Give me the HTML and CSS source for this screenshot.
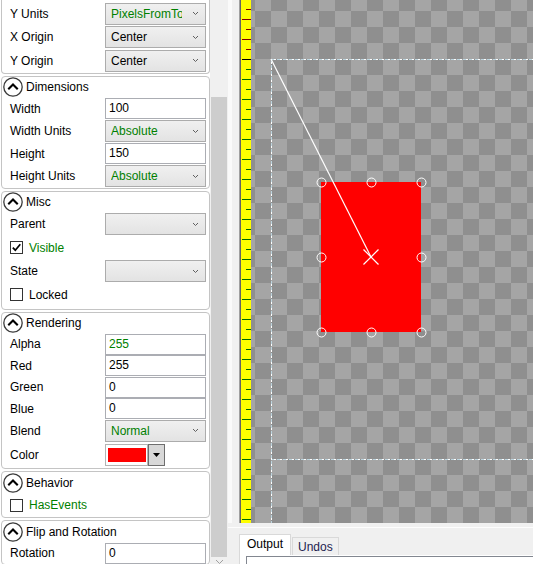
FILE: index.html
```html
<!DOCTYPE html>
<html>
<head>
<meta charset="utf-8">
<link rel="stylesheet" href="styles.css">
</head>
<body>
<div class="app">
  <div class="props">
    <div class="group first">
      <div class="row crow"><span class="label">Y Units</span><div class="combo green"><span class="ctext">PixelsFromTop</span><svg class="chev" width="7" height="5" viewBox="0 0 7 5"><polyline points="1,1 3.5,3.5 6,1"/></svg></div></div>
      <div class="row crow"><span class="label">X Origin</span><div class="combo"><span class="ctext">Center</span><svg class="chev" width="7" height="5" viewBox="0 0 7 5"><polyline points="1,1 3.5,3.5 6,1"/></svg></div></div>
      <div class="row crow"><span class="label">Y Origin</span><div class="combo"><span class="ctext">Center</span><svg class="chev" width="7" height="5" viewBox="0 0 7 5"><polyline points="1,1 3.5,3.5 6,1"/></svg></div></div>
    </div>

    <div class="group">
      <div class="ghead"><svg class="collapse" width="20" height="20" viewBox="0 0 20 20"><circle cx="10" cy="10" r="9.2"/><polyline points="6,11.6 10,7.6 14,11.6"/></svg><span>Dimensions</span></div>
      <div class="row"><span class="label">Width</span><div class="tbox">100</div></div>
      <div class="row crow"><span class="label">Width Units</span><div class="combo green"><span class="ctext">Absolute</span><svg class="chev" width="7" height="5" viewBox="0 0 7 5"><polyline points="1,1 3.5,3.5 6,1"/></svg></div></div>
      <div class="row"><span class="label">Height</span><div class="tbox">150</div></div>
      <div class="row crow"><span class="label">Height Units</span><div class="combo green"><span class="ctext">Absolute</span><svg class="chev" width="7" height="5" viewBox="0 0 7 5"><polyline points="1,1 3.5,3.5 6,1"/></svg></div></div>
    </div>

    <div class="group misc">
      <div class="ghead"><svg class="collapse" width="20" height="20" viewBox="0 0 20 20"><circle cx="10" cy="10" r="9.2"/><polyline points="6,11.6 10,7.6 14,11.6"/></svg><span>Misc</span></div>
      <div class="row crow"><span class="label">Parent</span><div class="combo"><span class="ctext"></span><svg class="chev" width="7" height="5" viewBox="0 0 7 5"><polyline points="1,1 3.5,3.5 6,1"/></svg></div></div>
      <div class="row krow"><span class="cbox"><svg width="11" height="11" viewBox="0 0 11 11"><polyline points="1.8,5.6 4.3,8.2 9.3,2.2"/></svg></span><span class="green">Visible</span></div>
      <div class="row crow"><span class="label">State</span><div class="combo"><span class="ctext"></span><svg class="chev" width="7" height="5" viewBox="0 0 7 5"><polyline points="1,1 3.5,3.5 6,1"/></svg></div></div>
      <div class="row krow"><span class="cbox"></span><span>Locked</span></div>
    </div>

    <div class="group rendering">
      <div class="ghead"><svg class="collapse" width="20" height="20" viewBox="0 0 20 20"><circle cx="10" cy="10" r="9.2"/><polyline points="6,11.6 10,7.6 14,11.6"/></svg><span>Rendering</span></div>
      <div class="row"><span class="label">Alpha</span><div class="tbox green">255</div></div>
      <div class="row"><span class="label">Red</span><div class="tbox">255</div></div>
      <div class="row"><span class="label">Green</span><div class="tbox">0</div></div>
      <div class="row"><span class="label">Blue</span><div class="tbox">0</div></div>
      <div class="row crow"><span class="label">Blend</span><div class="combo green"><span class="ctext">Normal</span><svg class="chev" width="7" height="5" viewBox="0 0 7 5"><polyline points="1,1 3.5,3.5 6,1"/></svg></div></div>
      <div class="row colorrow"><span class="label">Color</span><div class="swatch"><span class="swatch-fill"></span></div><div class="swbtn"><svg width="7" height="4" viewBox="0 0 7 4"><polygon points="0,0 7,0 3.5,4"/></svg></div></div>
    </div>

    <div class="group">
      <div class="ghead"><svg class="collapse" width="20" height="20" viewBox="0 0 20 20"><circle cx="10" cy="10" r="9.2"/><polyline points="6,11.6 10,7.6 14,11.6"/></svg><span>Behavior</span></div>
      <div class="row krow"><span class="cbox"></span><span class="green">HasEvents</span></div>
    </div>

    <div class="group">
      <div class="ghead"><svg class="collapse" width="20" height="20" viewBox="0 0 20 20"><circle cx="10" cy="10" r="9.2"/><polyline points="6,11.6 10,7.6 14,11.6"/></svg><span>Flip and Rotation</span></div>
      <div class="row"><span class="label">Rotation</span><div class="tbox">0</div></div>
    </div>
  </div>

  <div class="vscroll">
    <div class="thumb"></div>
    <div class="sbtn"><svg width="9" height="6" viewBox="0 0 9 6"><polyline points="1,1 4.5,4.5 8,1"/></svg></div>
  </div>

  <div class="workspace">
    <div class="stage">
      <div class="splitter"></div>
      <div class="ruler">
        <div class="ruler-top"></div>
        <div class="ruler-bottom"></div>
      </div>
      <div class="canvas">
        <svg class="overlay" width="282" height="523" viewBox="0 0 282 523">
          <rect x="70" y="182" width="100" height="150" fill="#ff0000"/>
          <g class="guide">
            <line x1="20.5" y1="59" x2="20.5" y2="523"/>
            <line x1="20" y1="59.5" x2="282" y2="59.5"/>
            <line x1="20" y1="459.5" x2="282" y2="459.5"/>
          </g>
          <g class="guide2">
            <line x1="20.5" y1="59" x2="20.5" y2="523"/>
            <line x1="20" y1="59.5" x2="282" y2="59.5"/>
            <line x1="20" y1="459.5" x2="282" y2="459.5"/>
          </g>
          <line class="wline" x1="20" y1="59" x2="120" y2="257"/>
          <line class="wline" x1="112.5" y1="249.5" x2="127.5" y2="264.5"/>
          <line class="wline" x1="127.5" y1="249.5" x2="112.5" y2="264.5"/>
          <g class="handles">
            <circle cx="70.5" cy="182.5" r="4.5"/>
            <circle cx="120.5" cy="182.5" r="4.5"/>
            <circle cx="170.5" cy="182.5" r="4.5"/>
            <circle cx="70.5" cy="257.5" r="4.5"/>
            <circle cx="170.5" cy="257.5" r="4.5"/>
            <circle cx="70.5" cy="332.5" r="4.5"/>
            <circle cx="120.5" cy="332.5" r="4.5"/>
            <circle cx="170.5" cy="332.5" r="4.5"/>
          </g>
        </svg>
      </div>
    </div>
    <div class="bottom">
      <div class="bottom-inner">
        <div class="tabs">
          <div class="tab active">Output</div>
          <div class="tab">Undos</div>
        </div>
        <div class="tabpage"><div class="outbox"></div></div>
      </div>
    </div>
  </div>
</div>
</body>
</html>
```

FILE: styles.css
```css
* { box-sizing: border-box; }
html, body { margin: 0; padding: 0; }
body {
  width: 533px;
  height: 564px;
  overflow: hidden;
  font-family: "Liberation Sans", Arial, sans-serif;
  font-size: 12px;
  color: #000;
  background: #fff;
}
.app { display: flex; width: 533px; height: 564px; }

/* property panel */
.props {
  width: 210px;
  height: 564px;
  overflow: hidden;
  background: #fff;
  padding-left: 1px;
  display: flex;
  flex-direction: column;
  gap: 2px;
  flex-shrink: 0;
}
.group {
  width: 209px;
  border: 1px solid #c4c4c4;
  border-radius: 4px;
  padding-bottom: 0;
  flex-shrink: 0;
}
.group.first {
  border-top: none;
  border-top-left-radius: 0;
  border-top-right-radius: 0;
  padding-top: 2px;
}
.group.first .row { height: 23.5px; }
.group.misc { padding-bottom: 2px; }
.group.rendering { padding-bottom: 1px; }
.group.rendering .row { height: 21.5px; }
.group.rendering .row.crow { height: 22.5px; }
.group.rendering .row.colorrow { height: 25px; }
.ghead {
  display: flex;
  align-items: center;
  height: 21px;
  padding-left: 1px;
  gap: 3px;
}
.collapse { display: block; flex-shrink: 0; }
.collapse circle { fill: #fff; stroke: #3a3a3a; stroke-width: 1.3; }
.collapse polyline { fill: none; stroke: #000; stroke-width: 2.1; stroke-linecap: square; }

.row {
  display: flex;
  align-items: center;
  height: 22px;
  padding-left: 8px;
}
.row.crow { height: 23px; }
.row.krow { height: 24px; }
.label { width: 95px; flex-shrink: 0; white-space: nowrap; }
.green { color: #008000; }

.tbox {
  width: 101px;
  height: 21px;
  border: 1px solid #abadb3;
  background: #fff;
  padding-left: 3px;
  line-height: 19px;
  white-space: nowrap;
}
.combo {
  width: 101px;
  height: 22px;
  border: 1px solid #acacac;
  background: linear-gradient(#f0f0f0, #e3e3e3);
  display: flex;
  align-items: center;
  padding-left: 5px;
  position: relative;
}
.ctext {
  width: 71px;
  overflow: hidden;
  white-space: nowrap;
  line-height: 20px;
}
.chev { margin-left: auto; margin-right: 6px; display: block; }
.chev polyline { fill: none; stroke: #606060; stroke-width: 1; }

.cbox {
  width: 13px;
  height: 13px;
  border: 1px solid #333;
  background: #fff;
  margin-right: 6px;
  display: flex;
  align-items: center;
  justify-content: center;
  flex-shrink: 0;
}
.cbox svg { display: block; }
.cbox polyline { fill: none; stroke: #000; stroke-width: 1.7; }

.swatch {
  width: 43px;
  height: 22px;
  border: 1px solid #b4b4b4;
  background: #fff;
  padding: 3px 1px 3px 2px;
  display: flex;
}
.swatch-fill { flex: 1; background: #ff0000; }
.swbtn {
  width: 17px;
  height: 22px;
  border: 1px solid #6e6e6e;
  background: #d8d8d8;
  display: flex;
  align-items: center;
  justify-content: center;
}
.swbtn svg { display: block; }
.swbtn polygon { fill: #000; }

/* scrollbar */
.vscroll {
  width: 18px;
  height: 564px;
  overflow: hidden;
  background: #f0f0f0;
  display: flex;
  flex-direction: column;
  flex-shrink: 0;
}
.thumb {
  margin-top: 97px;
  height: 460px;
  flex-shrink: 0;
  margin-left: 1px;
  margin-right: 1px;
  background: #cdcdcd;
}
.sbtn {
  height: 17px;
  flex-shrink: 0;
  display: flex;
  justify-content: center;
  padding-top: 2px;
}
.sbtn svg { display: block; }
.sbtn polyline { fill: none; stroke: #a0a0a0; stroke-width: 1; }

/* workspace */
.workspace {
  width: 305px;
  display: flex;
  flex-direction: column;
  background: #f0f0f0;
}
.stage { display: flex; height: 523px; flex-shrink: 0; }
.splitter {
  width: 13px;
  background: linear-gradient(to right, #fafafa 0 4px, #f0f0f0 4px 11px, #a0a0a0 11px 12px, #646464 12px 13px);
}
.ruler {
  width: 10px;
  background: #ffff00;
  display: flex;
  flex-direction: column;
}
.ruler-top {
  height: 59px;
  background-image:
    linear-gradient(to bottom, transparent 9px, #800000 9px 10px, transparent 10px),
    linear-gradient(to bottom, transparent 19px, #800000 19px 20px);
  background-size: 5px 20px, 9px 20px;
  background-position: right top, right top;
  background-repeat: repeat-y, repeat-y;
}
.ruler-bottom {
  flex: 1;
  background-image:
    linear-gradient(#000, #000),
    linear-gradient(to bottom, transparent 10px, #006b00 10px 11px, transparent 11px),
    linear-gradient(to bottom, #006b00 0 1px, transparent 1px);
  background-size: 9px 1px, 5px 20px, 9px 20px;
  background-position: right top, right top, right top;
  background-repeat: no-repeat, repeat-y, repeat-y;
}
.canvas {
  width: 282px;
  position: relative;
  overflow: hidden;
  background: repeating-conic-gradient(#a5a5a5 0 25%, #8f8f8f 0 50%);
  background-size: 32px 32px;
  background-position: 4px 11px;
}
.overlay { position: absolute; left: 0; top: 0; display: block; }
.guide line { stroke: #bcd5df; stroke-width: 1; stroke-dasharray: 3 3; shape-rendering: crispEdges; }
.guide2 line { stroke: #ffffff; stroke-width: 1; stroke-dasharray: 2 4; stroke-dashoffset: -3; shape-rendering: crispEdges; }
.wline { stroke: #fff; stroke-width: 1.2; }
.handles circle { fill: none; stroke: #fff; stroke-width: 1; }

/* bottom panel */
.bottom {
  flex: 1;
  padding-top: 4px;
  background: #f0f0f0;
}
.bottom-inner {
  border-top: 1px solid #fdfdfd;
  padding-top: 6px;
  padding-left: 11px;
  height: 100%;
  display: flex;
  flex-direction: column;
}
.tabs { display: flex; align-items: flex-end; height: 21px; }
.tab {
  border: 1px solid #d9d9d9;
  border-bottom: none;
  background: #f0f0f0;
  height: 18px;
  padding: 0 5px;
  line-height: 18px;
  color: #1e1e50;
}
.tab.active {
  background: #fff;
  height: 21px;
  padding: 0 7px;
  line-height: 19px;
  color: #000;
  margin-right: 1px;
}
.tabpage {
  flex: 1;
  background: #fff;
  border-left: 1px solid #d9d9d9;
  padding: 1px 0 0 6px;
}
.outbox {
  height: 20px;
  border: 1px solid #828790;
  border-right: none;
  background: #fff;
}
```
